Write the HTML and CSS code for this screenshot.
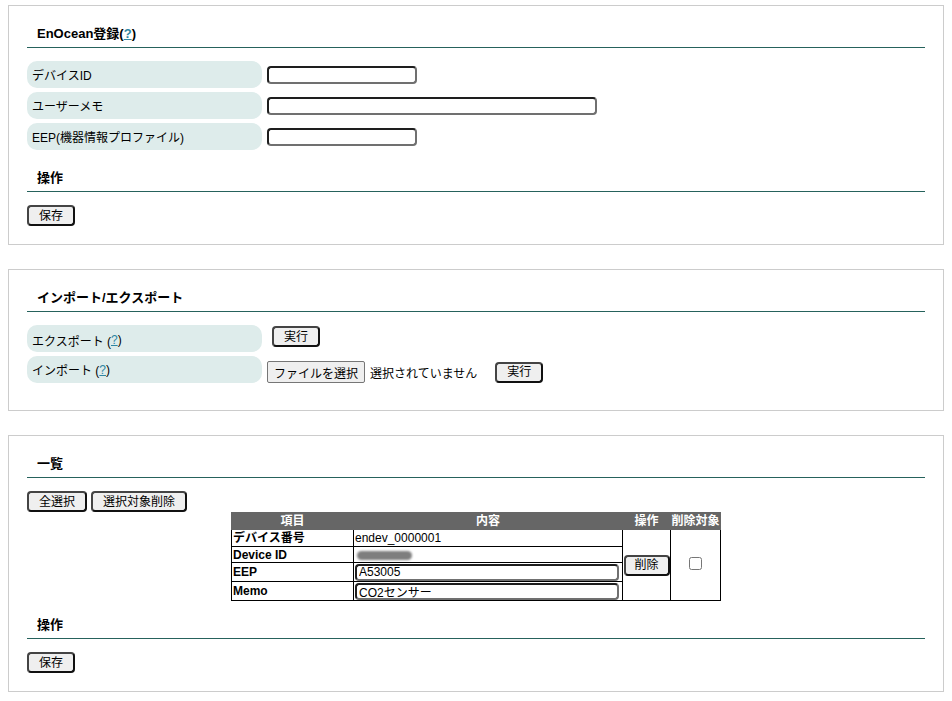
FILE: index.html
```html
<!DOCTYPE html>
<html lang="ja">
<head>
<meta charset="utf-8">
<title>EnOcean登録</title>
<link rel="stylesheet" href="styles.css">
</head>
<body>
<section class="panel">
  <h2 class="title">EnOcean登録(<a href="#" class="help">?</a>)</h2>
  <div class="rows">
    <div class="row"><div class="label">デバイスID</div><input class="text short" type="text"></div>
    <div class="row"><div class="label">ユーザーメモ</div><input class="text long" type="text"></div>
    <div class="row"><div class="label">EEP(機器情報プロファイル)</div><input class="text short" type="text"></div>
  </div>
  <h2 class="title sub">操作</h2>
  <div class="actions"><button class="btn" type="button">保存</button></div>
</section>

<section class="panel">
  <h2 class="title">インポート/エクスポート</h2>
  <div class="rows io">
    <div class="row top"><div class="label lbl-low">エクスポート (<a href="#" class="help">?</a>)</div><div class="ctl c-export"><button class="btn" type="button">実行</button></div></div>
    <div class="row top"><div class="label">インポート (<a href="#" class="help">?</a>)</div><div class="ctl c-import"><button class="file" type="button">ファイルを選択</button><span class="nofile">選択されていません</span><button class="btn" type="button">実行</button></div></div>
  </div>
</section>

<section class="panel">
  <h2 class="title">一覧</h2>
  <div class="actions tools"><button class="btn" type="button">全選択</button><button class="btn" type="button">選択対象削除</button></div>
  <table class="list">
    <colgroup><col class="w1"><col class="w2"><col class="w3"><col class="w4"></colgroup>
    <thead>
      <tr><th>項目</th><th>内容</th><th>操作</th><th>削除対象</th></tr>
    </thead>
    <tbody>
      <tr class="r1"><td class="key">デバイス番号</td><td>endev_0000001</td><td rowspan="4" class="op"><button class="btn del" type="button">削除</button></td><td rowspan="4" class="chk"><input type="checkbox"></td></tr>
      <tr class="r2"><td class="key">Device ID</td><td><span class="redact"></span></td></tr>
      <tr class="r3"><td class="key">EEP</td><td><input class="cell-in" type="text" value="A53005"></td></tr>
      <tr class="r4"><td class="key">Memo</td><td><input class="cell-in" type="text" value="CO2センサー"></td></tr>
    </tbody>
  </table>
  <h2 class="title sub2">操作</h2>
  <div class="actions a2"><button class="btn" type="button">保存</button></div>
</section>
</body>
</html>
```

FILE: styles.css
```css
body {
  margin: 5px 8px 8px;
  font-family: "Liberation Sans", "Noto Sans CJK JP", sans-serif;
  font-size: 12px;
  color: #000;
  background: #fff;
}

.panel {
  border: 1px solid #cccccc;
  padding: 19px 18px 18px;
  margin-bottom: 24px;
}

.title {
  margin: 0;
  font-size: 13px;
  font-weight: bold;
  line-height: 18px;
  padding: 0 10px 4px;
  border-bottom: 1px solid #26625c;
}

.help {
  color: #2f86a3;
  text-decoration: underline;
}

.rows {
  margin-top: 13px;
  display: flex;
  flex-direction: column;
  gap: 4px;
}

.rows.io {
  margin-bottom: 9px;
}

.row {
  display: flex;
  align-items: center;
  gap: 5px;
}

.row.top {
  align-items: flex-start;
}

.label {
  width: 235px;
  height: 27px;
  box-sizing: border-box;
  padding-left: 5px;
  background: #deeceb;
  border-radius: 10px;
  display: flex;
  align-items: center;
  font-size: 12px;
  flex: none;
}

.label.lbl-low {
  padding-top: 3px;
}

.text {
  box-sizing: border-box;
  height: 18px;
  border: 2px solid;
  border-color: #1e1e1e #707070 #707070 #1e1e1e;
  border-radius: 4px;
  background: #fff;
  padding: 0 3px;
  font: 12px "Liberation Sans", "Noto Sans CJK JP", sans-serif;
}

.text.short { width: 150px; }
.text.long { width: 330px; }

.sub { margin-top: 19px; }
.sub2 { margin-top: 15px; }

.actions {
  margin-top: 13px;
  display: flex;
  gap: 4px;
}

.btn {
  box-sizing: border-box;
  height: 21px;
  padding: 0 10px;
  border: 2px solid;
  border-color: #444 #111 #111 #444;
  border-radius: 4px;
  background: #efefef;
  color: #000;
  font: 12px/16px "Liberation Sans", "Noto Sans CJK JP", sans-serif;
}

.ctl {
  display: flex;
  align-items: center;
}

.c-export { margin-top: 1px; margin-left: 5px; }
.c-import { margin-top: 5px; }

.file {
  box-sizing: border-box;
  height: 22px;
  padding: 0 6px;
  border: 1px solid #767676;
  border-radius: 2px;
  background: #efefef;
  color: #000;
  font: 12px "Liberation Sans", "Noto Sans CJK JP", sans-serif;
}

.nofile {
  margin-left: 5px;
  margin-right: 18px;
  font-size: 12px;
}

.tools { margin-top: 13px; }

.list {
  margin: 0 auto;
  border-collapse: collapse;
  table-layout: fixed;
  width: 489px;
  font-size: 12px;
}

.w1 { width: 122px; }
.w2 { width: 269px; }
.w3 { width: 48px; }
.w4 { width: 50px; }

.list th {
  background: #666666;
  color: #fff;
  font-weight: bold;
  height: 16px;
  line-height: 16px;
  padding: 0;
  border: 1px solid #666666;
  white-space: nowrap;
}

.list td {
  border: 1px solid #000;
  padding: 0 1px;
  line-height: 14px;
  white-space: nowrap;
  overflow: hidden;
}

.list .key { font-weight: bold; }

.r1 td { height: 16px; }
.r2 td { height: 15px; }
.r3 td, .r4 td { height: 18px; }

.op, .chk {
  text-align: center;
  vertical-align: middle;
}

.list td.op { padding: 0; }

.btn.del {
  padding: 0 9px;
  width: 46px;
  height: 21px;
}

.chk input {
  width: 13px;
  height: 13px;
  margin: 0;
}

.redact {
  display: inline-block;
  width: 55px;
  height: 9px;
  margin-left: 2px;
  border-radius: 5px;
  background: #7e7e7e;
  filter: blur(1px);
  vertical-align: middle;
}

.cell-in {
  display: block;
  box-sizing: border-box;
  width: 264px;
  height: 17px;
  margin: 0;
  padding: 0 2px;
  border: 2px solid;
  border-color: #1e1e1e #707070 #707070 #1e1e1e;
  border-radius: 4px;
  background: #fff;
  font: 12px "Liberation Sans", "Noto Sans CJK JP", sans-serif;
}
```
